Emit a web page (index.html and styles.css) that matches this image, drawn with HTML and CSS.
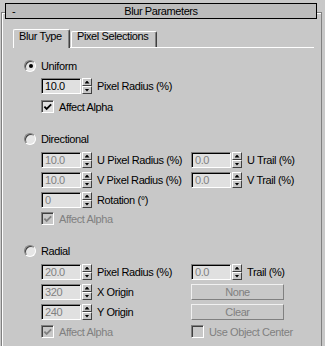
FILE: index.html
```html
<!DOCTYPE html>
<html>
<head>
<meta charset="utf-8">
<link rel="stylesheet" href="styles.css">
</head>
<body>
<div class="frame">
  <div class="header"><span class="minus">-</span><span class="title">Blur Parameters</span><span></span></div>
  <div class="tabs">
    <div class="tab active">Blur Type</div>
    <div class="tab">Pixel Selections</div>
  </div>
  <div class="panel">
    <section class="group uniform">
      <div class="radio-row"><span class="radio on"></span><span>Uniform</span></div>
      <div class="rows">
        <div class="spin-row"><span class="field">10.0</span><span class="spinner"><span class="sb up"><i></i></span><span class="sb down"><i></i></span></span><span class="lbl">Pixel Radius (%)</span></div>
        <div></div>
        <div class="check-row"><span class="check on"><svg width="11" height="11" viewBox="0 0 11 11"><polyline points="1.5,4.5 4,7 9,2" fill="none" stroke="#000" stroke-width="2"/></svg></span><span class="lbl">Affect Alpha</span></div>
      </div>
    </section>

    <section class="group">
      <div class="radio-row"><span class="radio"></span><span>Directional</span></div>
      <div class="rows">
        <div class="spin-row"><span class="field dis">10.0</span><span class="spinner"><span class="sb up"><i></i></span><span class="sb down"><i></i></span></span><span class="lbl">U Pixel Radius (%)</span></div>
        <div class="spin-row"><span class="field dis">0.0</span><span class="spinner"><span class="sb up"><i></i></span><span class="sb down"><i></i></span></span><span class="lbl">U Trail (%)</span></div>
        <div class="spin-row"><span class="field dis">10.0</span><span class="spinner"><span class="sb up"><i></i></span><span class="sb down"><i></i></span></span><span class="lbl">V Pixel Radius (%)</span></div>
        <div class="spin-row"><span class="field dis">0.0</span><span class="spinner"><span class="sb up"><i></i></span><span class="sb down"><i></i></span></span><span class="lbl">V Trail (%)</span></div>
        <div class="spin-row"><span class="field dis">0</span><span class="spinner"><span class="sb up"><i></i></span><span class="sb down"><i></i></span></span><span class="lbl">Rotation (°)</span></div>
        <div></div>
        <div class="check-row"><span class="check dis"><svg width="11" height="11" viewBox="0 0 11 11"><polyline points="1.5,4.5 4,7 9,2" fill="none" stroke="#808080" stroke-width="2"/></svg></span><span class="lbl gray">Affect Alpha</span></div>
      </div>
    </section>

    <section class="group">
      <div class="radio-row"><span class="radio"></span><span>Radial</span></div>
      <div class="rows">
        <div class="spin-row"><span class="field dis">20.0</span><span class="spinner"><span class="sb up"><i></i></span><span class="sb down"><i></i></span></span><span class="lbl">Pixel Radius (%)</span></div>
        <div class="spin-row"><span class="field dis">0.0</span><span class="spinner"><span class="sb up"><i></i></span><span class="sb down"><i></i></span></span><span class="lbl">Trail (%)</span></div>
        <div class="spin-row"><span class="field dis">320</span><span class="spinner"><span class="sb up"><i></i></span><span class="sb down"><i></i></span></span><span class="lbl">X Origin</span></div>
        <div class="btn">None</div>
        <div class="spin-row"><span class="field dis">240</span><span class="spinner"><span class="sb up"><i></i></span><span class="sb down"><i></i></span></span><span class="lbl">Y Origin</span></div>
        <div class="btn">Clear</div>
        <div class="check-row last"><span class="check dis"><svg width="11" height="11" viewBox="0 0 11 11"><polyline points="1.5,4.5 4,7 9,2" fill="none" stroke="#808080" stroke-width="2"/></svg></span><span class="lbl gray">Affect Alpha</span></div>
        <div class="check-row last"><span class="check dis"></span><span class="lbl gray">Use Object Center</span></div>
      </div>
    </section>
  </div>
</div>
</body>
</html>
```
FILE: styles.css
```css
* { box-sizing: border-box; }
html, body { margin: 0; padding: 0; }
body {
  background: #c8c8c8;
  width: 325px;
  height: 346px;
  overflow: hidden;
  font-family: "Liberation Sans", Arial, sans-serif;
  font-size: 11px;
  letter-spacing: -0.4px;
  color: #000;
}
.frame {
  margin: 12px 3px 0 1px;
  height: 334px;
  border: 1px solid #808080;
  border-bottom: none;
  box-shadow: inset 1px 1px 0 #fff;
}
.header {
  margin: -10px 4px 0 3px;
  height: 16px;
  border: 1px solid #000;
  background: #bcbcbc;
  display: grid;
  grid-template-columns: 1fr auto 1fr;
  align-items: center;
  line-height: 13px;
}
.minus { padding-left: 6px; }
.tabs {
  display: flex;
  align-items: flex-end;
  margin: 10px 7px 0 11px;
  height: 19px;
  border-bottom: 1px solid #fff;
}
.tab {
  height: 16px;
  width: 86px;
  margin-left: 1px;
  border-top: 1px solid #fff;
  border-left: 1px solid #fff;
  border-right: 1px solid #404040;
  border-radius: 2px 2px 0 0;
  box-shadow: inset -1px 0 0 #808080;
  padding-left: 5px;
  line-height: 9px;
  padding-top: 0;
}
.tab.active {
  width: 57px;
  margin-left: 0;
  height: 19px;
  margin-bottom: -1px;
  background: #c8c8c8;
  line-height: 13px;
  position: relative;
}
.panel { padding: 11px 0 0 22px; }
.group + .group { margin-top: 19px; }
.radio-row {
  display: flex;
  align-items: center;
  height: 13px;
  gap: 5px;
}
.radio {
  width: 12px;
  height: 12px;
  border-radius: 50%;
  border: 1px solid;
  border-color: #808080 #fff #fff #808080;
  background: #e6e6e6;
  box-shadow: inset 1px 1px 0 #404040;
  display: flex;
  align-items: center;
  justify-content: center;
}
.radio.on::after {
  content: "";
  width: 4px;
  height: 4px;
  border-radius: 50%;
  background: #000;
  margin: 1px 0 0 1px;
}
.rows {
  display: grid;
  grid-template-columns: 150px auto;
  row-gap: 4px;
  margin: 7px 0 0 17px;
}
.uniform .rows { row-gap: 6px; margin-top: 6px; }
.spin-row {
  display: flex;
  align-items: center;
  height: 16px;
}
.field {
  width: 40px;
  height: 16px;
  border: 1px solid;
  border-color: #808080 #fff #fff #808080;
  box-shadow: inset 1px 1px 0 #000;
  background: #e0e0e0;
  padding-left: 3px;
  line-height: 14px;
}
.field.dis { color: #808080; }
.spinner {
  width: 10px;
  height: 16px;
  margin-left: 1px;
  display: flex;
  flex-direction: column;
}
.sb {
  height: 8px;
  border: 1px solid;
  border-color: #fff #404040 #404040 #fff;
  background: #c8c8c8;
  display: flex;
  align-items: center;
  justify-content: center;
}
.sb i {
  display: block;
  width: 5px;
  height: 3px;
  background: #000;
}
.sb.up i { clip-path: polygon(50% 0, 100% 100%, 0 100%); }
.sb.down i { clip-path: polygon(0 0, 100% 0, 50% 100%); }
.lbl { margin-left: 5px; white-space: nowrap; }
.check-row {
  display: flex;
  align-items: center;
  height: 13px;
}
.check-row.last { margin-top: 1px; }
.check {
  width: 13px;
  height: 13px;
  border: 1px solid;
  border-color: #808080 #fff #fff #808080;
  box-shadow: inset 1px 1px 0 #404040;
  background: #e0e0e0;
  display: flex;
  align-items: center;
  justify-content: center;
  padding: 1px 0 0 1px;
}
.check.dis { background: #c8c8c8; }
.check svg { display: block; }
.gray { color: #808080; }
.btn {
  width: 93px;
  height: 16px;
  border: 1px solid;
  border-color: #f0f0f0 #808080 #808080 #f0f0f0;
  text-align: center;
  line-height: 14px;
  color: #808080;
}
```
